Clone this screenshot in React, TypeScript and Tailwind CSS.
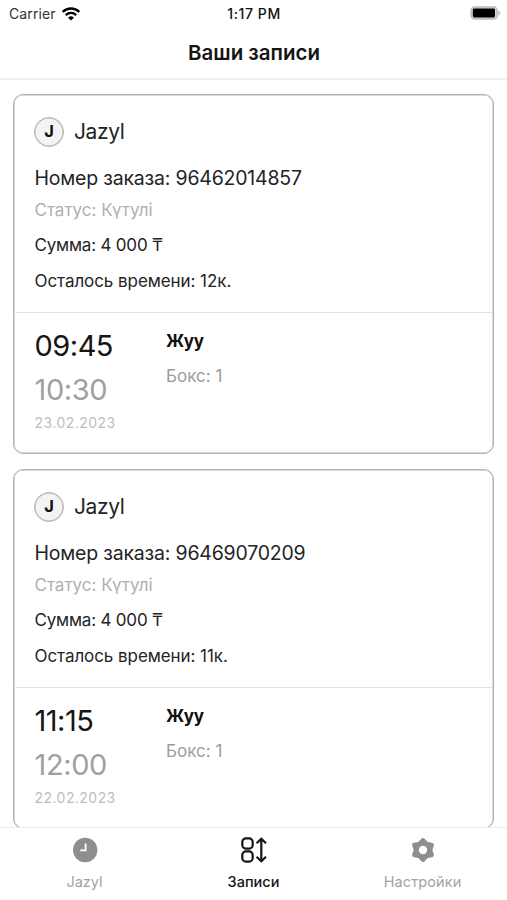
import React from "react";

type Booking = {
  merchant: string;
  orderId: string;
  status: string;
  price: string;
  timeLeft: string;
  start: string;
  end: string;
  date: string;
  service: string;
  box: number;
};

const bookings: Booking[] = [
  {
    merchant: "Jazyl",
    orderId: "96462014857",
    status: "Күтулі",
    price: "4 000 ₸",
    timeLeft: "12к.",
    start: "09:45",
    end: "10:30",
    date: "23.02.2023",
    service: "Жуу",
    box: 1,
  },
  {
    merchant: "Jazyl",
    orderId: "96469070209",
    status: "Күтулі",
    price: "4 000 ₸",
    timeLeft: "11к.",
    start: "11:15",
    end: "12:00",
    date: "22.02.2023",
    service: "Жуу",
    box: 1,
  },
];

const WifiIcon = () => (
  <svg width="18" height="14" viewBox="0 0 18 14" fill="none" stroke="#000">
    <path d="M0.7 4.9a11.8 11.8 0 0 1 16.6 0" strokeWidth="2.4" />
    <path d="M3.8 8.1a7.4 7.4 0 0 1 10.4 0" strokeWidth="2.3" />
    <path d="M9 13.6 6.1 10.7a4.2 4.2 0 0 1 5.8 0z" fill="#000" stroke="none" />
  </svg>
);

const BatteryIcon = () => (
  <svg width="31" height="14" viewBox="0 0 31 14">
    <rect x="1.1" y="1" width="26" height="12" rx="3.6" fill="#d8d8d8" stroke="#bcbcbc" strokeWidth="1.6" />
    <rect x="2.8" y="2.6" width="22.2" height="8.8" rx="1.4" fill="#000" />
    <path d="M28.4 4.6v4.8c1.1-.4 1.9-1.3 1.9-2.4s-.8-2-1.9-2.4z" fill="#bcbcbc" />
  </svg>
);

const ClockIcon = () => (
  <svg width="26" height="26" viewBox="0 0 26 26" fill="none">
    <circle cx="13.2" cy="13" r="12.2" fill="#8e8e8e" />
    <path d="M13.6 6.6v6.8H8.2" stroke="#fff" strokeWidth="1.8" />
  </svg>
);

const SortIcon = () => (
  <svg width="26" height="26" viewBox="0 0 26 26" fill="none" stroke="#151515" strokeWidth="2.2">
    <rect x="1.3" y="1.4" width="10.4" height="10.2" rx="3.6" />
    <rect x="1.3" y="14.4" width="10.4" height="10.2" rx="3.6" />
    <path d="M20.3 2v22M15.6 6.2l4.7-4.4 4.7 4.4M15.6 19.8l4.7 4.4 4.7-4.4" />
  </svg>
);

const GearIcon = () => (
  <svg width="26" height="26" viewBox="0 0 26 26">
    <path
      d="M13 3.4 16.4 7.1 21.6 8 19.9 13 21.6 18 16.4 18.9 13 22.6 9.6 18.9 4.4 18 6.1 13 4.4 8 9.6 7.1z"
      fill="#8e8e8e"
      stroke="#8e8e8e"
      strokeWidth="4.6"
      strokeLinejoin="round"
    />
    <circle cx="13" cy="13" r="4.2" fill="#fff" />
  </svg>
);

const StatusBar = () => (
  <div className="grid h-[27px] shrink-0 grid-cols-3 items-center pl-[9px] pr-[6px] text-[14px]">
    <div className="flex items-center gap-[6px] tracking-[0.1px] text-[#333]">
      <span>Carrier</span>
      <WifiIcon />
    </div>
    <span className="-ml-[2px] text-center text-[14px] font-medium tracking-[0.6px] text-[#111]">
      1:17 PM
    </span>
    <div className="-mt-px flex justify-end">
      <BatteryIcon />
    </div>
  </div>
);

const BookingCard = ({ booking }: { booking: Booking }) => (
  <div className="h-[360px] shrink-0 rounded-[10px] border border-[#b3b3b3] bg-white text-[#242424] shadow-[inset_0_0_0_0.5px_#b3b3b3]">
    <div className="flex h-[218px] flex-col border-b border-[#e0e0e0] pl-5 pt-[21px]">
      <div className="flex h-[31px] items-center gap-2.5">
        <div className="flex size-[30px] items-center justify-center rounded-full border border-[#b3b3b3] bg-[#f3f3f3] text-[16.5px] font-bold text-[#111] shadow-[inset_0_0_0_0.5px_#b3b3b3]">
          {booking.merchant[0]}
        </div>
        <span className="text-[21px] tracking-[-0.4px]">
          {booking.merchant}
        </span>
      </div>
      <p className="mt-[17px] pl-[0.5px] text-[19.5px] leading-[28px] tracking-[-0.2px]">
        Номер заказа: {booking.orderId}
      </p>
      <p className="mt-[6px] pl-[0.5px] text-[17px] leading-[24px] text-[#b0b0b0]">
        Статус: {booking.status}
      </p>
      <p className="mt-[11px] pl-[0.5px] text-[17px] leading-[24px] tracking-[-0.2px]">
        Сумма: {booking.price}
      </p>
      <p className="mt-[12px] pl-[0.5px] text-[17px] leading-[24px] tracking-[-0.07px]">
        Осталось времени: {booking.timeLeft}
      </p>
    </div>
    <div className="flex pl-5 pt-[15px]">
      <div className="w-[132px]">
        <p className="pl-[0.5px] text-[29px] leading-[36px] tracking-[-0.5px] text-[#151515]">
          {booking.start}
        </p>
        <p className="mt-2 pl-[0.5px] text-[29px] leading-[36px] tracking-[-0.4px] text-[#a0a0a0]">
          {booking.end}
        </p>
        <p className="mt-1 pl-[0.5px] text-[14px] leading-[22px] tracking-[0.45px] text-[#bdbdbd]">
          {booking.date}
        </p>
      </div>
      <div className="pt-px">
        <p className="text-[17px] leading-[24px] font-bold tracking-[-0.3px] text-[#111]">
          {booking.service}
        </p>
        <p className="mt-[11px] text-[17px] leading-[24px] text-[#9c9c9c]">
          Бокс: {booking.box}
        </p>
      </div>
    </div>
  </div>
);

const TabBar = () => (
  <nav className="grid h-[73px] shrink-0 grid-cols-3 border-t border-[#ececec] bg-white text-[14.5px] leading-[20px] text-[#a3a3a3]">
    <div className="flex flex-col items-center gap-[9px] pt-[9px]">
      <ClockIcon />
      <span>Jazyl</span>
    </div>
    <div className="flex flex-col items-center gap-[9px] pt-[9px] text-[#151515]">
      <SortIcon />
      <span className="font-medium">Записи</span>
    </div>
    <div className="flex flex-col items-center gap-[9px] pt-[9px]">
      <GearIcon />
      <span className="tracking-[0.1px]">Настройки</span>
    </div>
  </nav>
);

const App = () => {
  return (
    <div className="flex h-[900px] w-[507px] flex-col overflow-hidden bg-white font-['Inter',sans-serif]">
      <StatusBar />
      <header className="flex h-[53px] shrink-0 items-center justify-center border-b-2 border-[#efefef]">
        <h1 className="mt-px pl-px text-[20.5px] font-semibold tracking-[-0.02px] text-[#151515]">
          Ваши записи
        </h1>
      </header>
      <main className="flex min-h-0 flex-1 flex-col gap-[15px] overflow-hidden px-[13px] pt-[14px]">
        {bookings.map((booking) => (
          <BookingCard key={booking.orderId} booking={booking} />
        ))}
      </main>
      <TabBar />
    </div>
  );
};

export default App;
